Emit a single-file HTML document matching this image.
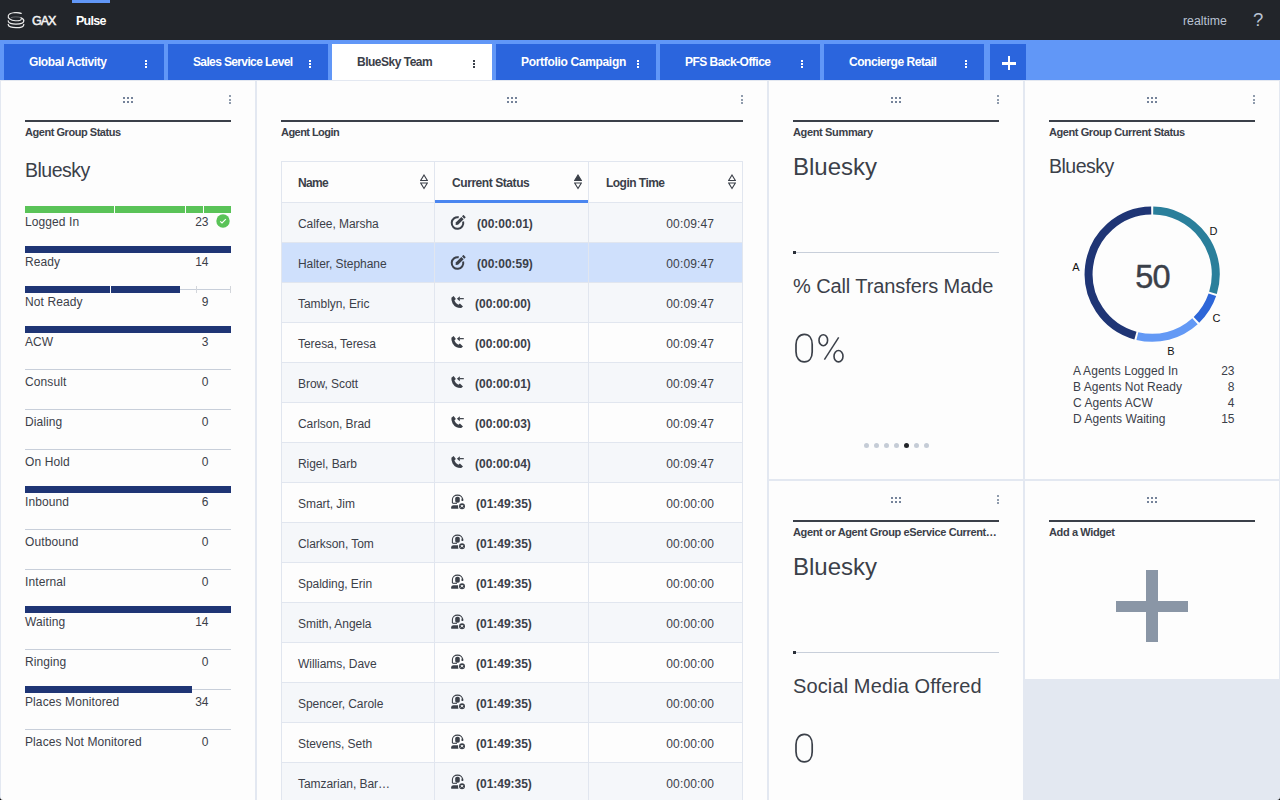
<!DOCTYPE html>
<html><head><meta charset="utf-8"><title>Pulse</title>
<style>
html,body{margin:0;padding:0;width:1280px;height:800px;overflow:hidden;background:#e3e8f1;font-family:"Liberation Sans", sans-serif;}
body{position:relative;}
</style></head><body>
<div style="position:absolute;left:0px;top:0px;width:1280px;height:40px;background:#22252a;"></div>
<div style="position:absolute;left:72px;top:0px;width:38px;height:3px;background:#6197f7;"></div>
<svg style="position:absolute;left:6px;top:10px" width="20" height="20" viewBox="0 0 20 20">
<g fill="none" stroke="#ececec" stroke-linecap="round">
<path d="M15.2 3.4 C11 2.0 3.6 2.4 2.3 5.6 C1.5 8.0 4.6 10.4 9.4 10.7 C12.6 10.9 15.0 10.3 15.2 9.4" stroke-width="1.15"/>
<path d="M8.4 2.6 C10.5 2.3 13 2.6 15.1 3.4" stroke-width="1" stroke-opacity="0.5"/>
<path d="M5.2 7.6 C7.4 6.6 12 6.6 15 7.6" stroke-width="1" stroke-opacity="0.35"/>
<path d="M2.2 10.9 C2.0 13.2 6.0 14.2 10 14.2 C14 14.2 17.8 13.2 17.8 10.8 C17.8 9.4 16.6 8.4 15.0 7.8" stroke-width="1.3"/>
<path d="M2.2 14.4 C2.0 16.8 6.0 17.7 10 17.7 C14 17.7 17.8 16.8 17.8 14.4" stroke-width="1.3"/>
</g></svg>
<div style="position:absolute;top:14.72px;font-size:12.5px;line-height:12.5px;font-weight:400;color:#f2f2f2;white-space:nowrap;letter-spacing:-1.0px;left:32px;-webkit-text-stroke:0.5px #f2f2f2;">GAX</div>
<div style="position:absolute;top:15.42px;font-size:12.5px;line-height:12.5px;font-weight:700;color:#ffffff;white-space:nowrap;letter-spacing:-0.75px;left:76px;">Pulse</div>
<div style="position:absolute;top:14.59px;font-size:12.3px;line-height:12.3px;font-weight:400;color:#b9c3d3;white-space:nowrap;left:1183px;">realtime</div>
<div style="position:absolute;top:11.34px;font-size:18.5px;line-height:18.5px;font-weight:400;color:#b9c3d3;white-space:nowrap;left:1253px;">?</div>
<div style="position:absolute;left:0px;top:40px;width:1280px;height:40px;background:#6197f7;"></div>
<div style="position:absolute;left:4px;top:44px;width:160px;height:36px;background:#2b65dd;"></div>
<div style="position:absolute;top:55.84px;font-size:12px;line-height:12px;font-weight:700;color:#ffffff;white-space:nowrap;letter-spacing:-0.4px;left:29px;">Global Activity</div>
<div style="position:absolute;left:145px;top:60px;width:2px;height:2px;background:#ffffff;"></div>
<div style="position:absolute;left:145px;top:63px;width:2px;height:2px;background:#ffffff;"></div>
<div style="position:absolute;left:145px;top:66px;width:2px;height:2px;background:#ffffff;"></div>
<div style="position:absolute;left:168px;top:44px;width:160px;height:36px;background:#2b65dd;"></div>
<div style="position:absolute;top:55.84px;font-size:12px;line-height:12px;font-weight:700;color:#ffffff;white-space:nowrap;letter-spacing:-0.63px;left:193px;">Sales Service Level</div>
<div style="position:absolute;left:309px;top:60px;width:2px;height:2px;background:#ffffff;"></div>
<div style="position:absolute;left:309px;top:63px;width:2px;height:2px;background:#ffffff;"></div>
<div style="position:absolute;left:309px;top:66px;width:2px;height:2px;background:#ffffff;"></div>
<div style="position:absolute;left:332px;top:44px;width:160px;height:36px;background:#ffffff;"></div>
<div style="position:absolute;top:55.84px;font-size:12px;line-height:12px;font-weight:700;color:#3b4049;white-space:nowrap;letter-spacing:-0.5px;left:357px;">BlueSky Team</div>
<div style="position:absolute;left:473px;top:60px;width:2px;height:2px;background:#3b4049;"></div>
<div style="position:absolute;left:473px;top:63px;width:2px;height:2px;background:#3b4049;"></div>
<div style="position:absolute;left:473px;top:66px;width:2px;height:2px;background:#3b4049;"></div>
<div style="position:absolute;left:496px;top:44px;width:160px;height:36px;background:#2b65dd;"></div>
<div style="position:absolute;top:55.84px;font-size:12px;line-height:12px;font-weight:700;color:#ffffff;white-space:nowrap;letter-spacing:-0.32px;left:521px;">Portfolio Campaign</div>
<div style="position:absolute;left:637px;top:60px;width:2px;height:2px;background:#ffffff;"></div>
<div style="position:absolute;left:637px;top:63px;width:2px;height:2px;background:#ffffff;"></div>
<div style="position:absolute;left:637px;top:66px;width:2px;height:2px;background:#ffffff;"></div>
<div style="position:absolute;left:660px;top:44px;width:160px;height:36px;background:#2b65dd;"></div>
<div style="position:absolute;top:55.84px;font-size:12px;line-height:12px;font-weight:700;color:#ffffff;white-space:nowrap;letter-spacing:-0.53px;left:685px;">PFS Back-Office</div>
<div style="position:absolute;left:801px;top:60px;width:2px;height:2px;background:#ffffff;"></div>
<div style="position:absolute;left:801px;top:63px;width:2px;height:2px;background:#ffffff;"></div>
<div style="position:absolute;left:801px;top:66px;width:2px;height:2px;background:#ffffff;"></div>
<div style="position:absolute;left:824px;top:44px;width:160px;height:36px;background:#2b65dd;"></div>
<div style="position:absolute;top:55.84px;font-size:12px;line-height:12px;font-weight:700;color:#ffffff;white-space:nowrap;letter-spacing:-0.45px;left:849px;">Concierge Retail</div>
<div style="position:absolute;left:965px;top:60px;width:2px;height:2px;background:#ffffff;"></div>
<div style="position:absolute;left:965px;top:63px;width:2px;height:2px;background:#ffffff;"></div>
<div style="position:absolute;left:965px;top:66px;width:2px;height:2px;background:#ffffff;"></div>
<div style="position:absolute;left:990px;top:44px;width:36px;height:36px;background:#2b65dd;"></div>
<div style="position:absolute;left:1002px;top:62px;width:14px;height:2.5px;background:#ffffff;"></div>
<div style="position:absolute;left:1007.5px;top:56px;width:2.5px;height:14px;background:#ffffff;"></div>
<div style="position:absolute;left:0px;top:80px;width:1280px;height:720px;background:#e3e8f1;"></div>
<div style="position:absolute;left:1px;top:81px;width:254px;height:719px;background:#fdfdfd;"></div>
<div style="position:absolute;left:123.0px;top:97px;width:2px;height:2px;background:#75839a;"></div>
<div style="position:absolute;left:127.0px;top:97px;width:2px;height:2px;background:#75839a;"></div>
<div style="position:absolute;left:131.0px;top:97px;width:2px;height:2px;background:#75839a;"></div>
<div style="position:absolute;left:123.0px;top:101px;width:2px;height:2px;background:#75839a;"></div>
<div style="position:absolute;left:127.0px;top:101px;width:2px;height:2px;background:#75839a;"></div>
<div style="position:absolute;left:131.0px;top:101px;width:2px;height:2px;background:#75839a;"></div>
<div style="position:absolute;left:229px;top:95.0px;width:2px;height:2px;background:#909cad;"></div>
<div style="position:absolute;left:229px;top:98.5px;width:2px;height:2px;background:#909cad;"></div>
<div style="position:absolute;left:229px;top:102.0px;width:2px;height:2px;background:#909cad;"></div>
<div style="position:absolute;left:25px;top:120px;width:206px;height:2px;background:#3b4049;"></div>
<div style="position:absolute;top:127.49px;font-size:11px;line-height:11px;font-weight:700;color:#3b4049;white-space:nowrap;letter-spacing:-0.46px;left:25px;">Agent Group Status</div>
<div style="position:absolute;top:160.69px;font-size:19.5px;line-height:19.5px;font-weight:400;color:#3b4049;white-space:nowrap;letter-spacing:-0.5px;left:25px;">Bluesky</div>
<div style="position:absolute;left:25px;top:206px;width:206px;height:6.5px;background:#5ac358;"></div>
<div style="position:absolute;left:114px;top:206px;width:1px;height:6.5px;background:#fdfdfd;"></div>
<div style="position:absolute;left:185px;top:206px;width:1px;height:6.5px;background:#fdfdfd;"></div>
<div style="position:absolute;left:203px;top:206px;width:1px;height:6.5px;background:#fdfdfd;"></div>
<svg style="position:absolute;left:216.4px;top:214px" width="14" height="14" viewBox="0 0 14 14"><circle cx="7" cy="7" r="6.7" fill="#5ac358"/><path d="M4.2 7.4 L6 9 L9.8 5.2" fill="none" stroke="#fff" stroke-width="1.15"/></svg>
<div style="position:absolute;top:215.84px;font-size:12px;line-height:12px;font-weight:400;color:#3b4049;white-space:nowrap;letter-spacing:0.1px;left:25px;">Logged In</div>
<div style="position:absolute;top:215.84px;font-size:12px;line-height:12px;font-weight:400;color:#3b4049;white-space:nowrap;left:-91.5px;width:300px;text-align:right;">23</div>
<div style="position:absolute;left:25px;top:246px;width:206px;height:6.5px;background:#1f3575;"></div>
<div style="position:absolute;top:255.84px;font-size:12px;line-height:12px;font-weight:400;color:#3b4049;white-space:nowrap;letter-spacing:0.1px;left:25px;">Ready</div>
<div style="position:absolute;top:255.84px;font-size:12px;line-height:12px;font-weight:400;color:#3b4049;white-space:nowrap;left:-91.5px;width:300px;text-align:right;">14</div>
<div style="position:absolute;left:25px;top:289px;width:206px;height:1px;background:#c8cfda;"></div>
<div style="position:absolute;left:196px;top:286px;width:1px;height:6.5px;background:#d3d6db;"></div>
<div style="position:absolute;left:230px;top:286px;width:1px;height:6.5px;background:#d3d6db;"></div>
<div style="position:absolute;left:25px;top:286px;width:155px;height:6.5px;background:#1f3575;"></div>
<div style="position:absolute;left:110px;top:286px;width:1px;height:6.5px;background:#fdfdfd;"></div>
<div style="position:absolute;top:295.84px;font-size:12px;line-height:12px;font-weight:400;color:#3b4049;white-space:nowrap;letter-spacing:0.1px;left:25px;">Not Ready</div>
<div style="position:absolute;top:295.84px;font-size:12px;line-height:12px;font-weight:400;color:#3b4049;white-space:nowrap;left:-91.5px;width:300px;text-align:right;">9</div>
<div style="position:absolute;left:25px;top:326px;width:206px;height:6.5px;background:#1f3575;"></div>
<div style="position:absolute;top:335.84px;font-size:12px;line-height:12px;font-weight:400;color:#3b4049;white-space:nowrap;letter-spacing:0.1px;left:25px;">ACW</div>
<div style="position:absolute;top:335.84px;font-size:12px;line-height:12px;font-weight:400;color:#3b4049;white-space:nowrap;left:-91.5px;width:300px;text-align:right;">3</div>
<div style="position:absolute;left:25px;top:369px;width:206px;height:1px;background:#c8cfda;"></div>
<div style="position:absolute;top:375.84px;font-size:12px;line-height:12px;font-weight:400;color:#3b4049;white-space:nowrap;letter-spacing:0.1px;left:25px;">Consult</div>
<div style="position:absolute;top:375.84px;font-size:12px;line-height:12px;font-weight:400;color:#3b4049;white-space:nowrap;left:-91.5px;width:300px;text-align:right;">0</div>
<div style="position:absolute;left:25px;top:409px;width:206px;height:1px;background:#c8cfda;"></div>
<div style="position:absolute;top:415.84px;font-size:12px;line-height:12px;font-weight:400;color:#3b4049;white-space:nowrap;letter-spacing:0.1px;left:25px;">Dialing</div>
<div style="position:absolute;top:415.84px;font-size:12px;line-height:12px;font-weight:400;color:#3b4049;white-space:nowrap;left:-91.5px;width:300px;text-align:right;">0</div>
<div style="position:absolute;left:25px;top:449px;width:206px;height:1px;background:#c8cfda;"></div>
<div style="position:absolute;top:455.84px;font-size:12px;line-height:12px;font-weight:400;color:#3b4049;white-space:nowrap;letter-spacing:0.1px;left:25px;">On Hold</div>
<div style="position:absolute;top:455.84px;font-size:12px;line-height:12px;font-weight:400;color:#3b4049;white-space:nowrap;left:-91.5px;width:300px;text-align:right;">0</div>
<div style="position:absolute;left:25px;top:486px;width:206px;height:6.5px;background:#1f3575;"></div>
<div style="position:absolute;top:495.84px;font-size:12px;line-height:12px;font-weight:400;color:#3b4049;white-space:nowrap;letter-spacing:0.1px;left:25px;">Inbound</div>
<div style="position:absolute;top:495.84px;font-size:12px;line-height:12px;font-weight:400;color:#3b4049;white-space:nowrap;left:-91.5px;width:300px;text-align:right;">6</div>
<div style="position:absolute;left:25px;top:529px;width:206px;height:1px;background:#c8cfda;"></div>
<div style="position:absolute;top:535.84px;font-size:12px;line-height:12px;font-weight:400;color:#3b4049;white-space:nowrap;letter-spacing:0.1px;left:25px;">Outbound</div>
<div style="position:absolute;top:535.84px;font-size:12px;line-height:12px;font-weight:400;color:#3b4049;white-space:nowrap;left:-91.5px;width:300px;text-align:right;">0</div>
<div style="position:absolute;left:25px;top:569px;width:206px;height:1px;background:#c8cfda;"></div>
<div style="position:absolute;top:575.84px;font-size:12px;line-height:12px;font-weight:400;color:#3b4049;white-space:nowrap;letter-spacing:0.1px;left:25px;">Internal</div>
<div style="position:absolute;top:575.84px;font-size:12px;line-height:12px;font-weight:400;color:#3b4049;white-space:nowrap;left:-91.5px;width:300px;text-align:right;">0</div>
<div style="position:absolute;left:25px;top:606px;width:206px;height:6.5px;background:#1f3575;"></div>
<div style="position:absolute;top:615.84px;font-size:12px;line-height:12px;font-weight:400;color:#3b4049;white-space:nowrap;letter-spacing:0.1px;left:25px;">Waiting</div>
<div style="position:absolute;top:615.84px;font-size:12px;line-height:12px;font-weight:400;color:#3b4049;white-space:nowrap;left:-91.5px;width:300px;text-align:right;">14</div>
<div style="position:absolute;left:25px;top:649px;width:206px;height:1px;background:#c8cfda;"></div>
<div style="position:absolute;top:655.84px;font-size:12px;line-height:12px;font-weight:400;color:#3b4049;white-space:nowrap;letter-spacing:0.1px;left:25px;">Ringing</div>
<div style="position:absolute;top:655.84px;font-size:12px;line-height:12px;font-weight:400;color:#3b4049;white-space:nowrap;left:-91.5px;width:300px;text-align:right;">0</div>
<div style="position:absolute;left:25px;top:689px;width:206px;height:1px;background:#c8cfda;"></div>
<div style="position:absolute;left:25px;top:686px;width:167px;height:6.5px;background:#1f3575;"></div>
<div style="position:absolute;top:695.84px;font-size:12px;line-height:12px;font-weight:400;color:#3b4049;white-space:nowrap;letter-spacing:0.1px;left:25px;">Places Monitored</div>
<div style="position:absolute;top:695.84px;font-size:12px;line-height:12px;font-weight:400;color:#3b4049;white-space:nowrap;left:-91.5px;width:300px;text-align:right;">34</div>
<div style="position:absolute;left:25px;top:729px;width:206px;height:1px;background:#c8cfda;"></div>
<div style="position:absolute;top:735.84px;font-size:12px;line-height:12px;font-weight:400;color:#3b4049;white-space:nowrap;letter-spacing:0.1px;left:25px;">Places Not Monitored</div>
<div style="position:absolute;top:735.84px;font-size:12px;line-height:12px;font-weight:400;color:#3b4049;white-space:nowrap;left:-91.5px;width:300px;text-align:right;">0</div>
<div style="position:absolute;left:257px;top:81px;width:510px;height:719px;background:#fdfdfd;"></div>
<div style="position:absolute;left:507.0px;top:97px;width:2px;height:2px;background:#75839a;"></div>
<div style="position:absolute;left:511.0px;top:97px;width:2px;height:2px;background:#75839a;"></div>
<div style="position:absolute;left:515.0px;top:97px;width:2px;height:2px;background:#75839a;"></div>
<div style="position:absolute;left:507.0px;top:101px;width:2px;height:2px;background:#75839a;"></div>
<div style="position:absolute;left:511.0px;top:101px;width:2px;height:2px;background:#75839a;"></div>
<div style="position:absolute;left:515.0px;top:101px;width:2px;height:2px;background:#75839a;"></div>
<div style="position:absolute;left:741px;top:95.0px;width:2px;height:2px;background:#909cad;"></div>
<div style="position:absolute;left:741px;top:98.5px;width:2px;height:2px;background:#909cad;"></div>
<div style="position:absolute;left:741px;top:102.0px;width:2px;height:2px;background:#909cad;"></div>
<div style="position:absolute;left:281px;top:120px;width:462px;height:2px;background:#3b4049;"></div>
<div style="position:absolute;top:127.49px;font-size:11px;line-height:11px;font-weight:700;color:#3b4049;white-space:nowrap;letter-spacing:-0.55px;left:281px;">Agent Login</div>
<div style="position:absolute;left:281px;top:161px;width:462px;height:639px;background:#fdfdfd;"></div>
<div style="position:absolute;left:282px;top:202px;width:460px;height:40px;background:#f5f7fa;"></div>
<div style="position:absolute;left:281px;top:202px;width:462px;height:1px;background:#e1e6ef;"></div>
<div style="position:absolute;top:217.84px;font-size:12px;line-height:12px;font-weight:400;color:#3b4049;white-space:nowrap;letter-spacing:-0.05px;left:298px;">Calfee, Marsha</div>
<div style="position:absolute;left:450px;top:215px;width:16px;height:16px"><svg width="16" height="16" viewBox="0 0 16 16" style="position:absolute;left:0;top:0"><path d="M13.13 6.6 A5.8 5.8 0 1 1 8.73 2.33" fill="none" stroke="#3b4049" stroke-width="2"/><path d="M5.77 7.57 L11.37 1.97 L13.63 4.23 L8.03 9.83 L5.6 10.1 Z" fill="#3b4049"/><path d="M11.97 1.37 L13.47 -0.13 L15.73 2.13 L14.23 3.63 Z" fill="#3b4049"/></svg></div>
<div style="position:absolute;top:217.84px;font-size:12px;line-height:12px;font-weight:700;color:#3b4049;white-space:nowrap;letter-spacing:-0.02px;left:477px;">(00:00:01)</div>
<div style="position:absolute;top:217.84px;font-size:12px;line-height:12px;font-weight:400;color:#3b4049;white-space:nowrap;letter-spacing:0.15px;left:414.20000000000005px;width:300px;text-align:right;">00:09:47</div>
<div style="position:absolute;left:282px;top:242px;width:460px;height:40px;background:#cfe0fc;"></div>
<div style="position:absolute;left:281px;top:242px;width:462px;height:1px;background:#e1e6ef;"></div>
<div style="position:absolute;top:257.84px;font-size:12px;line-height:12px;font-weight:400;color:#3b4049;white-space:nowrap;letter-spacing:-0.05px;left:298px;">Halter, Stephane</div>
<div style="position:absolute;left:450px;top:255px;width:16px;height:16px"><svg width="16" height="16" viewBox="0 0 16 16" style="position:absolute;left:0;top:0"><path d="M13.13 6.6 A5.8 5.8 0 1 1 8.73 2.33" fill="none" stroke="#3b4049" stroke-width="2"/><path d="M5.77 7.57 L11.37 1.97 L13.63 4.23 L8.03 9.83 L5.6 10.1 Z" fill="#3b4049"/><path d="M11.97 1.37 L13.47 -0.13 L15.73 2.13 L14.23 3.63 Z" fill="#3b4049"/></svg></div>
<div style="position:absolute;top:257.84px;font-size:12px;line-height:12px;font-weight:700;color:#3b4049;white-space:nowrap;letter-spacing:-0.02px;left:477px;">(00:00:59)</div>
<div style="position:absolute;top:257.84px;font-size:12px;line-height:12px;font-weight:400;color:#3b4049;white-space:nowrap;letter-spacing:0.15px;left:414.20000000000005px;width:300px;text-align:right;">00:09:47</div>
<div style="position:absolute;left:282px;top:282px;width:460px;height:40px;background:#f5f7fa;"></div>
<div style="position:absolute;left:281px;top:282px;width:462px;height:1px;background:#e1e6ef;"></div>
<div style="position:absolute;top:297.84px;font-size:12px;line-height:12px;font-weight:400;color:#3b4049;white-space:nowrap;letter-spacing:-0.05px;left:298px;">Tamblyn, Eric</div>
<div style="position:absolute;left:450px;top:295px;width:16px;height:16px"><svg width="16" height="16" viewBox="0 0 16 16" style="position:absolute;left:0;top:0"><path d="M1.4 2.8 L3.6 1.0 L5.9 3.9 L4.4 5.4 Q5.6 8.4 8.4 9.8 L9.9 8.5 L13 11.4 L11.2 13 Q5.6 13.2 2.6 8.4 Q1.0 5.4 1.4 2.8 Z" fill="#3b4049"/><path d="M6.9 3.7 L9.8 1.2 L9.8 6.3 Z" fill="#3b4049"/><rect x="9.5" y="3.05" width="4.3" height="1.2" fill="#3b4049"/></svg></div>
<div style="position:absolute;top:297.84px;font-size:12px;line-height:12px;font-weight:700;color:#3b4049;white-space:nowrap;letter-spacing:-0.02px;left:475px;">(00:00:00)</div>
<div style="position:absolute;top:297.84px;font-size:12px;line-height:12px;font-weight:400;color:#3b4049;white-space:nowrap;letter-spacing:0.15px;left:414.20000000000005px;width:300px;text-align:right;">00:09:47</div>
<div style="position:absolute;left:282px;top:322px;width:460px;height:40px;background:#fdfdfd;"></div>
<div style="position:absolute;left:281px;top:322px;width:462px;height:1px;background:#e1e6ef;"></div>
<div style="position:absolute;top:337.84px;font-size:12px;line-height:12px;font-weight:400;color:#3b4049;white-space:nowrap;letter-spacing:-0.05px;left:298px;">Teresa, Teresa</div>
<div style="position:absolute;left:450px;top:335px;width:16px;height:16px"><svg width="16" height="16" viewBox="0 0 16 16" style="position:absolute;left:0;top:0"><path d="M1.4 2.8 L3.6 1.0 L5.9 3.9 L4.4 5.4 Q5.6 8.4 8.4 9.8 L9.9 8.5 L13 11.4 L11.2 13 Q5.6 13.2 2.6 8.4 Q1.0 5.4 1.4 2.8 Z" fill="#3b4049"/><path d="M6.9 3.7 L9.8 1.2 L9.8 6.3 Z" fill="#3b4049"/><rect x="9.5" y="3.05" width="4.3" height="1.2" fill="#3b4049"/></svg></div>
<div style="position:absolute;top:337.84px;font-size:12px;line-height:12px;font-weight:700;color:#3b4049;white-space:nowrap;letter-spacing:-0.02px;left:475px;">(00:00:00)</div>
<div style="position:absolute;top:337.84px;font-size:12px;line-height:12px;font-weight:400;color:#3b4049;white-space:nowrap;letter-spacing:0.15px;left:414.20000000000005px;width:300px;text-align:right;">00:09:47</div>
<div style="position:absolute;left:282px;top:362px;width:460px;height:40px;background:#f5f7fa;"></div>
<div style="position:absolute;left:281px;top:362px;width:462px;height:1px;background:#e1e6ef;"></div>
<div style="position:absolute;top:377.84px;font-size:12px;line-height:12px;font-weight:400;color:#3b4049;white-space:nowrap;letter-spacing:-0.05px;left:298px;">Brow, Scott</div>
<div style="position:absolute;left:450px;top:375px;width:16px;height:16px"><svg width="16" height="16" viewBox="0 0 16 16" style="position:absolute;left:0;top:0"><path d="M1.4 2.8 L3.6 1.0 L5.9 3.9 L4.4 5.4 Q5.6 8.4 8.4 9.8 L9.9 8.5 L13 11.4 L11.2 13 Q5.6 13.2 2.6 8.4 Q1.0 5.4 1.4 2.8 Z" fill="#3b4049"/><path d="M6.9 3.7 L9.8 1.2 L9.8 6.3 Z" fill="#3b4049"/><rect x="9.5" y="3.05" width="4.3" height="1.2" fill="#3b4049"/></svg></div>
<div style="position:absolute;top:377.84px;font-size:12px;line-height:12px;font-weight:700;color:#3b4049;white-space:nowrap;letter-spacing:-0.02px;left:475px;">(00:00:01)</div>
<div style="position:absolute;top:377.84px;font-size:12px;line-height:12px;font-weight:400;color:#3b4049;white-space:nowrap;letter-spacing:0.15px;left:414.20000000000005px;width:300px;text-align:right;">00:09:47</div>
<div style="position:absolute;left:282px;top:402px;width:460px;height:40px;background:#fdfdfd;"></div>
<div style="position:absolute;left:281px;top:402px;width:462px;height:1px;background:#e1e6ef;"></div>
<div style="position:absolute;top:417.84px;font-size:12px;line-height:12px;font-weight:400;color:#3b4049;white-space:nowrap;letter-spacing:-0.05px;left:298px;">Carlson, Brad</div>
<div style="position:absolute;left:450px;top:415px;width:16px;height:16px"><svg width="16" height="16" viewBox="0 0 16 16" style="position:absolute;left:0;top:0"><path d="M1.4 2.8 L3.6 1.0 L5.9 3.9 L4.4 5.4 Q5.6 8.4 8.4 9.8 L9.9 8.5 L13 11.4 L11.2 13 Q5.6 13.2 2.6 8.4 Q1.0 5.4 1.4 2.8 Z" fill="#3b4049"/><path d="M6.9 3.7 L9.8 1.2 L9.8 6.3 Z" fill="#3b4049"/><rect x="9.5" y="3.05" width="4.3" height="1.2" fill="#3b4049"/></svg></div>
<div style="position:absolute;top:417.84px;font-size:12px;line-height:12px;font-weight:700;color:#3b4049;white-space:nowrap;letter-spacing:-0.02px;left:475px;">(00:00:03)</div>
<div style="position:absolute;top:417.84px;font-size:12px;line-height:12px;font-weight:400;color:#3b4049;white-space:nowrap;letter-spacing:0.15px;left:414.20000000000005px;width:300px;text-align:right;">00:09:47</div>
<div style="position:absolute;left:282px;top:442px;width:460px;height:40px;background:#f5f7fa;"></div>
<div style="position:absolute;left:281px;top:442px;width:462px;height:1px;background:#e1e6ef;"></div>
<div style="position:absolute;top:457.84px;font-size:12px;line-height:12px;font-weight:400;color:#3b4049;white-space:nowrap;letter-spacing:-0.05px;left:298px;">Rigel, Barb</div>
<div style="position:absolute;left:450px;top:455px;width:16px;height:16px"><svg width="16" height="16" viewBox="0 0 16 16" style="position:absolute;left:0;top:0"><path d="M1.4 2.8 L3.6 1.0 L5.9 3.9 L4.4 5.4 Q5.6 8.4 8.4 9.8 L9.9 8.5 L13 11.4 L11.2 13 Q5.6 13.2 2.6 8.4 Q1.0 5.4 1.4 2.8 Z" fill="#3b4049"/><path d="M6.9 3.7 L9.8 1.2 L9.8 6.3 Z" fill="#3b4049"/><rect x="9.5" y="3.05" width="4.3" height="1.2" fill="#3b4049"/></svg></div>
<div style="position:absolute;top:457.84px;font-size:12px;line-height:12px;font-weight:700;color:#3b4049;white-space:nowrap;letter-spacing:-0.02px;left:475px;">(00:00:04)</div>
<div style="position:absolute;top:457.84px;font-size:12px;line-height:12px;font-weight:400;color:#3b4049;white-space:nowrap;letter-spacing:0.15px;left:414.20000000000005px;width:300px;text-align:right;">00:09:47</div>
<div style="position:absolute;left:282px;top:482px;width:460px;height:40px;background:#fdfdfd;"></div>
<div style="position:absolute;left:281px;top:482px;width:462px;height:1px;background:#e1e6ef;"></div>
<div style="position:absolute;top:497.84px;font-size:12px;line-height:12px;font-weight:400;color:#3b4049;white-space:nowrap;letter-spacing:-0.05px;left:298px;">Smart, Jim</div>
<div style="position:absolute;left:450px;top:494px;width:16px;height:16px"><svg width="16" height="16" viewBox="0 0 16 16" style="position:absolute;left:0;top:0"><path d="M2.4 9 L2.4 5.8 C2.4 3 4.6 1.1 7.5 1.1 C10.4 1.1 12.6 3 12.6 5.8" fill="none" stroke="#3b4049" stroke-width="1.1"/><rect x="11.5" y="4.6" width="1.8" height="2.3" rx="0.5" fill="#3b4049"/><rect x="5.2" y="2.8" width="4.6" height="6" rx="1.8" fill="#3b4049"/><path d="M2.4 9.3 L7 9.3" stroke="#3b4049" stroke-width="1.1"/><path d="M1.2 14.8 L1.2 13.2 C1.2 11.9 2.2 11.2 3.4 11.2 L8.4 11.2 L8.4 14.8 Z" fill="#3b4049"/><circle cx="12" cy="12.2" r="3.7" fill="#fdfdfd"/><circle cx="12" cy="12.2" r="3" fill="#3b4049"/><path d="M10.8 11 L13.2 13.4 M13.2 11 L10.8 13.4" stroke="#fdfdfd" stroke-width="1"/></svg></div>
<div style="position:absolute;top:497.84px;font-size:12px;line-height:12px;font-weight:700;color:#3b4049;white-space:nowrap;letter-spacing:-0.02px;left:476px;">(01:49:35)</div>
<div style="position:absolute;top:497.84px;font-size:12px;line-height:12px;font-weight:400;color:#3b4049;white-space:nowrap;letter-spacing:0.15px;left:414.20000000000005px;width:300px;text-align:right;">00:00:00</div>
<div style="position:absolute;left:282px;top:522px;width:460px;height:40px;background:#f5f7fa;"></div>
<div style="position:absolute;left:281px;top:522px;width:462px;height:1px;background:#e1e6ef;"></div>
<div style="position:absolute;top:537.84px;font-size:12px;line-height:12px;font-weight:400;color:#3b4049;white-space:nowrap;letter-spacing:-0.05px;left:298px;">Clarkson, Tom</div>
<div style="position:absolute;left:450px;top:534px;width:16px;height:16px"><svg width="16" height="16" viewBox="0 0 16 16" style="position:absolute;left:0;top:0"><path d="M2.4 9 L2.4 5.8 C2.4 3 4.6 1.1 7.5 1.1 C10.4 1.1 12.6 3 12.6 5.8" fill="none" stroke="#3b4049" stroke-width="1.1"/><rect x="11.5" y="4.6" width="1.8" height="2.3" rx="0.5" fill="#3b4049"/><rect x="5.2" y="2.8" width="4.6" height="6" rx="1.8" fill="#3b4049"/><path d="M2.4 9.3 L7 9.3" stroke="#3b4049" stroke-width="1.1"/><path d="M1.2 14.8 L1.2 13.2 C1.2 11.9 2.2 11.2 3.4 11.2 L8.4 11.2 L8.4 14.8 Z" fill="#3b4049"/><circle cx="12" cy="12.2" r="3.7" fill="#fdfdfd"/><circle cx="12" cy="12.2" r="3" fill="#3b4049"/><path d="M10.8 11 L13.2 13.4 M13.2 11 L10.8 13.4" stroke="#fdfdfd" stroke-width="1"/></svg></div>
<div style="position:absolute;top:537.84px;font-size:12px;line-height:12px;font-weight:700;color:#3b4049;white-space:nowrap;letter-spacing:-0.02px;left:476px;">(01:49:35)</div>
<div style="position:absolute;top:537.84px;font-size:12px;line-height:12px;font-weight:400;color:#3b4049;white-space:nowrap;letter-spacing:0.15px;left:414.20000000000005px;width:300px;text-align:right;">00:00:00</div>
<div style="position:absolute;left:282px;top:562px;width:460px;height:40px;background:#fdfdfd;"></div>
<div style="position:absolute;left:281px;top:562px;width:462px;height:1px;background:#e1e6ef;"></div>
<div style="position:absolute;top:577.84px;font-size:12px;line-height:12px;font-weight:400;color:#3b4049;white-space:nowrap;letter-spacing:-0.05px;left:298px;">Spalding, Erin</div>
<div style="position:absolute;left:450px;top:574px;width:16px;height:16px"><svg width="16" height="16" viewBox="0 0 16 16" style="position:absolute;left:0;top:0"><path d="M2.4 9 L2.4 5.8 C2.4 3 4.6 1.1 7.5 1.1 C10.4 1.1 12.6 3 12.6 5.8" fill="none" stroke="#3b4049" stroke-width="1.1"/><rect x="11.5" y="4.6" width="1.8" height="2.3" rx="0.5" fill="#3b4049"/><rect x="5.2" y="2.8" width="4.6" height="6" rx="1.8" fill="#3b4049"/><path d="M2.4 9.3 L7 9.3" stroke="#3b4049" stroke-width="1.1"/><path d="M1.2 14.8 L1.2 13.2 C1.2 11.9 2.2 11.2 3.4 11.2 L8.4 11.2 L8.4 14.8 Z" fill="#3b4049"/><circle cx="12" cy="12.2" r="3.7" fill="#fdfdfd"/><circle cx="12" cy="12.2" r="3" fill="#3b4049"/><path d="M10.8 11 L13.2 13.4 M13.2 11 L10.8 13.4" stroke="#fdfdfd" stroke-width="1"/></svg></div>
<div style="position:absolute;top:577.84px;font-size:12px;line-height:12px;font-weight:700;color:#3b4049;white-space:nowrap;letter-spacing:-0.02px;left:476px;">(01:49:35)</div>
<div style="position:absolute;top:577.84px;font-size:12px;line-height:12px;font-weight:400;color:#3b4049;white-space:nowrap;letter-spacing:0.15px;left:414.20000000000005px;width:300px;text-align:right;">00:00:00</div>
<div style="position:absolute;left:282px;top:602px;width:460px;height:40px;background:#f5f7fa;"></div>
<div style="position:absolute;left:281px;top:602px;width:462px;height:1px;background:#e1e6ef;"></div>
<div style="position:absolute;top:617.84px;font-size:12px;line-height:12px;font-weight:400;color:#3b4049;white-space:nowrap;letter-spacing:-0.05px;left:298px;">Smith, Angela</div>
<div style="position:absolute;left:450px;top:614px;width:16px;height:16px"><svg width="16" height="16" viewBox="0 0 16 16" style="position:absolute;left:0;top:0"><path d="M2.4 9 L2.4 5.8 C2.4 3 4.6 1.1 7.5 1.1 C10.4 1.1 12.6 3 12.6 5.8" fill="none" stroke="#3b4049" stroke-width="1.1"/><rect x="11.5" y="4.6" width="1.8" height="2.3" rx="0.5" fill="#3b4049"/><rect x="5.2" y="2.8" width="4.6" height="6" rx="1.8" fill="#3b4049"/><path d="M2.4 9.3 L7 9.3" stroke="#3b4049" stroke-width="1.1"/><path d="M1.2 14.8 L1.2 13.2 C1.2 11.9 2.2 11.2 3.4 11.2 L8.4 11.2 L8.4 14.8 Z" fill="#3b4049"/><circle cx="12" cy="12.2" r="3.7" fill="#fdfdfd"/><circle cx="12" cy="12.2" r="3" fill="#3b4049"/><path d="M10.8 11 L13.2 13.4 M13.2 11 L10.8 13.4" stroke="#fdfdfd" stroke-width="1"/></svg></div>
<div style="position:absolute;top:617.84px;font-size:12px;line-height:12px;font-weight:700;color:#3b4049;white-space:nowrap;letter-spacing:-0.02px;left:476px;">(01:49:35)</div>
<div style="position:absolute;top:617.84px;font-size:12px;line-height:12px;font-weight:400;color:#3b4049;white-space:nowrap;letter-spacing:0.15px;left:414.20000000000005px;width:300px;text-align:right;">00:00:00</div>
<div style="position:absolute;left:282px;top:642px;width:460px;height:40px;background:#fdfdfd;"></div>
<div style="position:absolute;left:281px;top:642px;width:462px;height:1px;background:#e1e6ef;"></div>
<div style="position:absolute;top:657.84px;font-size:12px;line-height:12px;font-weight:400;color:#3b4049;white-space:nowrap;letter-spacing:-0.05px;left:298px;">Williams, Dave</div>
<div style="position:absolute;left:450px;top:654px;width:16px;height:16px"><svg width="16" height="16" viewBox="0 0 16 16" style="position:absolute;left:0;top:0"><path d="M2.4 9 L2.4 5.8 C2.4 3 4.6 1.1 7.5 1.1 C10.4 1.1 12.6 3 12.6 5.8" fill="none" stroke="#3b4049" stroke-width="1.1"/><rect x="11.5" y="4.6" width="1.8" height="2.3" rx="0.5" fill="#3b4049"/><rect x="5.2" y="2.8" width="4.6" height="6" rx="1.8" fill="#3b4049"/><path d="M2.4 9.3 L7 9.3" stroke="#3b4049" stroke-width="1.1"/><path d="M1.2 14.8 L1.2 13.2 C1.2 11.9 2.2 11.2 3.4 11.2 L8.4 11.2 L8.4 14.8 Z" fill="#3b4049"/><circle cx="12" cy="12.2" r="3.7" fill="#fdfdfd"/><circle cx="12" cy="12.2" r="3" fill="#3b4049"/><path d="M10.8 11 L13.2 13.4 M13.2 11 L10.8 13.4" stroke="#fdfdfd" stroke-width="1"/></svg></div>
<div style="position:absolute;top:657.84px;font-size:12px;line-height:12px;font-weight:700;color:#3b4049;white-space:nowrap;letter-spacing:-0.02px;left:476px;">(01:49:35)</div>
<div style="position:absolute;top:657.84px;font-size:12px;line-height:12px;font-weight:400;color:#3b4049;white-space:nowrap;letter-spacing:0.15px;left:414.20000000000005px;width:300px;text-align:right;">00:00:00</div>
<div style="position:absolute;left:282px;top:682px;width:460px;height:40px;background:#f5f7fa;"></div>
<div style="position:absolute;left:281px;top:682px;width:462px;height:1px;background:#e1e6ef;"></div>
<div style="position:absolute;top:697.84px;font-size:12px;line-height:12px;font-weight:400;color:#3b4049;white-space:nowrap;letter-spacing:-0.05px;left:298px;">Spencer, Carole</div>
<div style="position:absolute;left:450px;top:694px;width:16px;height:16px"><svg width="16" height="16" viewBox="0 0 16 16" style="position:absolute;left:0;top:0"><path d="M2.4 9 L2.4 5.8 C2.4 3 4.6 1.1 7.5 1.1 C10.4 1.1 12.6 3 12.6 5.8" fill="none" stroke="#3b4049" stroke-width="1.1"/><rect x="11.5" y="4.6" width="1.8" height="2.3" rx="0.5" fill="#3b4049"/><rect x="5.2" y="2.8" width="4.6" height="6" rx="1.8" fill="#3b4049"/><path d="M2.4 9.3 L7 9.3" stroke="#3b4049" stroke-width="1.1"/><path d="M1.2 14.8 L1.2 13.2 C1.2 11.9 2.2 11.2 3.4 11.2 L8.4 11.2 L8.4 14.8 Z" fill="#3b4049"/><circle cx="12" cy="12.2" r="3.7" fill="#fdfdfd"/><circle cx="12" cy="12.2" r="3" fill="#3b4049"/><path d="M10.8 11 L13.2 13.4 M13.2 11 L10.8 13.4" stroke="#fdfdfd" stroke-width="1"/></svg></div>
<div style="position:absolute;top:697.84px;font-size:12px;line-height:12px;font-weight:700;color:#3b4049;white-space:nowrap;letter-spacing:-0.02px;left:476px;">(01:49:35)</div>
<div style="position:absolute;top:697.84px;font-size:12px;line-height:12px;font-weight:400;color:#3b4049;white-space:nowrap;letter-spacing:0.15px;left:414.20000000000005px;width:300px;text-align:right;">00:00:00</div>
<div style="position:absolute;left:282px;top:722px;width:460px;height:40px;background:#fdfdfd;"></div>
<div style="position:absolute;left:281px;top:722px;width:462px;height:1px;background:#e1e6ef;"></div>
<div style="position:absolute;top:737.84px;font-size:12px;line-height:12px;font-weight:400;color:#3b4049;white-space:nowrap;letter-spacing:-0.05px;left:298px;">Stevens, Seth</div>
<div style="position:absolute;left:450px;top:734px;width:16px;height:16px"><svg width="16" height="16" viewBox="0 0 16 16" style="position:absolute;left:0;top:0"><path d="M2.4 9 L2.4 5.8 C2.4 3 4.6 1.1 7.5 1.1 C10.4 1.1 12.6 3 12.6 5.8" fill="none" stroke="#3b4049" stroke-width="1.1"/><rect x="11.5" y="4.6" width="1.8" height="2.3" rx="0.5" fill="#3b4049"/><rect x="5.2" y="2.8" width="4.6" height="6" rx="1.8" fill="#3b4049"/><path d="M2.4 9.3 L7 9.3" stroke="#3b4049" stroke-width="1.1"/><path d="M1.2 14.8 L1.2 13.2 C1.2 11.9 2.2 11.2 3.4 11.2 L8.4 11.2 L8.4 14.8 Z" fill="#3b4049"/><circle cx="12" cy="12.2" r="3.7" fill="#fdfdfd"/><circle cx="12" cy="12.2" r="3" fill="#3b4049"/><path d="M10.8 11 L13.2 13.4 M13.2 11 L10.8 13.4" stroke="#fdfdfd" stroke-width="1"/></svg></div>
<div style="position:absolute;top:737.84px;font-size:12px;line-height:12px;font-weight:700;color:#3b4049;white-space:nowrap;letter-spacing:-0.02px;left:476px;">(01:49:35)</div>
<div style="position:absolute;top:737.84px;font-size:12px;line-height:12px;font-weight:400;color:#3b4049;white-space:nowrap;letter-spacing:0.15px;left:414.20000000000005px;width:300px;text-align:right;">00:00:00</div>
<div style="position:absolute;left:282px;top:762px;width:460px;height:40px;background:#f5f7fa;"></div>
<div style="position:absolute;left:281px;top:762px;width:462px;height:1px;background:#e1e6ef;"></div>
<div style="position:absolute;top:777.84px;font-size:12px;line-height:12px;font-weight:400;color:#3b4049;white-space:nowrap;letter-spacing:-0.05px;left:298px;">Tamzarian, Bar…</div>
<div style="position:absolute;left:450px;top:774px;width:16px;height:16px"><svg width="16" height="16" viewBox="0 0 16 16" style="position:absolute;left:0;top:0"><path d="M2.4 9 L2.4 5.8 C2.4 3 4.6 1.1 7.5 1.1 C10.4 1.1 12.6 3 12.6 5.8" fill="none" stroke="#3b4049" stroke-width="1.1"/><rect x="11.5" y="4.6" width="1.8" height="2.3" rx="0.5" fill="#3b4049"/><rect x="5.2" y="2.8" width="4.6" height="6" rx="1.8" fill="#3b4049"/><path d="M2.4 9.3 L7 9.3" stroke="#3b4049" stroke-width="1.1"/><path d="M1.2 14.8 L1.2 13.2 C1.2 11.9 2.2 11.2 3.4 11.2 L8.4 11.2 L8.4 14.8 Z" fill="#3b4049"/><circle cx="12" cy="12.2" r="3.7" fill="#fdfdfd"/><circle cx="12" cy="12.2" r="3" fill="#3b4049"/><path d="M10.8 11 L13.2 13.4 M13.2 11 L10.8 13.4" stroke="#fdfdfd" stroke-width="1"/></svg></div>
<div style="position:absolute;top:777.84px;font-size:12px;line-height:12px;font-weight:700;color:#3b4049;white-space:nowrap;letter-spacing:-0.02px;left:476px;">(01:49:35)</div>
<div style="position:absolute;top:777.84px;font-size:12px;line-height:12px;font-weight:400;color:#3b4049;white-space:nowrap;letter-spacing:0.15px;left:414.20000000000005px;width:300px;text-align:right;">00:00:00</div>
<div style="position:absolute;left:281px;top:161px;width:462px;height:1px;background:#e1e6ef;"></div>
<div style="position:absolute;left:281px;top:161px;width:1px;height:639px;background:#e1e6ef;"></div>
<div style="position:absolute;left:742px;top:161px;width:1px;height:639px;background:#e1e6ef;"></div>
<div style="position:absolute;left:434px;top:161px;width:1px;height:639px;background:#e1e6ef;"></div>
<div style="position:absolute;left:588px;top:161px;width:1px;height:639px;background:#e1e6ef;"></div>
<div style="position:absolute;left:435px;top:200px;width:153px;height:2.5px;background:#4a86f0;"></div>
<div style="position:absolute;top:176.84px;font-size:12px;line-height:12px;font-weight:700;color:#3b4049;white-space:nowrap;letter-spacing:-0.7px;left:298px;">Name</div>
<div style="position:absolute;top:176.84px;font-size:12px;line-height:12px;font-weight:700;color:#3b4049;white-space:nowrap;letter-spacing:-0.43px;left:452px;">Current Status</div>
<div style="position:absolute;top:176.84px;font-size:12px;line-height:12px;font-weight:700;color:#3b4049;white-space:nowrap;letter-spacing:-0.53px;left:606px;">Login Time</div>
<svg style="position:absolute;left:420px;top:174px" width="8" height="16" viewBox="0 0 8 16"><path d="M4 1 L7.3 6.5 L0.7 6.5 Z" fill="none" stroke="#3b4049" stroke-width="1.1"/><path d="M0.7 9 L7.3 9 L4 14.5 Z" fill="none" stroke="#3b4049" stroke-width="1.1"/></svg>
<svg style="position:absolute;left:574px;top:174px" width="8" height="16" viewBox="0 0 8 16"><path d="M4 1 L7.3 6.5 L0.7 6.5 Z" fill="#3b4049" stroke="#3b4049" stroke-width="1.1"/><path d="M0.7 9 L7.3 9 L4 14.5 Z" fill="none" stroke="#3b4049" stroke-width="1.1"/></svg>
<svg style="position:absolute;left:728px;top:174px" width="8" height="16" viewBox="0 0 8 16"><path d="M4 1 L7.3 6.5 L0.7 6.5 Z" fill="none" stroke="#3b4049" stroke-width="1.1"/><path d="M0.7 9 L7.3 9 L4 14.5 Z" fill="none" stroke="#3b4049" stroke-width="1.1"/></svg>
<div style="position:absolute;left:769px;top:81px;width:254px;height:398px;background:#fdfdfd;"></div>
<div style="position:absolute;left:891.0px;top:97px;width:2px;height:2px;background:#75839a;"></div>
<div style="position:absolute;left:895.0px;top:97px;width:2px;height:2px;background:#75839a;"></div>
<div style="position:absolute;left:899.0px;top:97px;width:2px;height:2px;background:#75839a;"></div>
<div style="position:absolute;left:891.0px;top:101px;width:2px;height:2px;background:#75839a;"></div>
<div style="position:absolute;left:895.0px;top:101px;width:2px;height:2px;background:#75839a;"></div>
<div style="position:absolute;left:899.0px;top:101px;width:2px;height:2px;background:#75839a;"></div>
<div style="position:absolute;left:997px;top:95.0px;width:2px;height:2px;background:#909cad;"></div>
<div style="position:absolute;left:997px;top:98.5px;width:2px;height:2px;background:#909cad;"></div>
<div style="position:absolute;left:997px;top:102.0px;width:2px;height:2px;background:#909cad;"></div>
<div style="position:absolute;left:793px;top:120px;width:206px;height:2px;background:#3b4049;"></div>
<div style="position:absolute;top:127.49px;font-size:11px;line-height:11px;font-weight:700;color:#3b4049;white-space:nowrap;letter-spacing:-0.35px;left:793px;">Agent Summary</div>
<div style="position:absolute;top:154.68px;font-size:24px;line-height:24px;font-weight:400;color:#3b4049;white-space:nowrap;left:793px;">Bluesky</div>
<div style="position:absolute;left:793px;top:252px;width:206px;height:1px;background:#c8cfda;"></div>
<div style="position:absolute;left:793px;top:251px;width:3px;height:3px;background:#2a2f38;"></div>
<div style="position:absolute;top:276.07px;font-size:20px;line-height:20px;font-weight:400;color:#3b4049;white-space:nowrap;letter-spacing:-0.1px;left:793px;">% Call Transfers Made</div>
<svg style="position:absolute;left:0;top:0" width="1280" height="800"><path d="M804.3 334.3 C809.3 334.3 812.2 338.6 812.2 344.5 L812.2 351.7 C812.2 357.6 809.3 361.9 804.3 361.9 C799.3 361.9 796.0 357.6 796.0 351.7 L796.0 344.5 C796.0 338.6 799.3 334.3 804.3 334.3 Z" fill="none" stroke="#3b4049" stroke-width="1.7"/><ellipse cx="823.3" cy="340.2" rx="4.3" ry="5.5" fill="none" stroke="#3b4049" stroke-width="1.6"/><ellipse cx="838.5" cy="356.2" rx="4.5" ry="5.7" fill="none" stroke="#3b4049" stroke-width="1.6"/><path d="M824.4 359.6 L838.7 337.4" stroke="#3b4049" stroke-width="1.5"/></svg>
<div style="position:absolute;left:863.5px;top:442.5px;width:5px;height:5px;border-radius:50%;background:#c5ccd6"></div>
<div style="position:absolute;left:873.5px;top:442.5px;width:5px;height:5px;border-radius:50%;background:#c5ccd6"></div>
<div style="position:absolute;left:883.5px;top:442.5px;width:5px;height:5px;border-radius:50%;background:#c5ccd6"></div>
<div style="position:absolute;left:893.5px;top:442.5px;width:5px;height:5px;border-radius:50%;background:#c5ccd6"></div>
<div style="position:absolute;left:903.5px;top:442.5px;width:5px;height:5px;border-radius:50%;background:#22252a"></div>
<div style="position:absolute;left:913.5px;top:442.5px;width:5px;height:5px;border-radius:50%;background:#c5ccd6"></div>
<div style="position:absolute;left:923.5px;top:442.5px;width:5px;height:5px;border-radius:50%;background:#c5ccd6"></div>
<div style="position:absolute;left:1025px;top:81px;width:254px;height:398px;background:#fdfdfd;"></div>
<div style="position:absolute;left:1147.0px;top:97px;width:2px;height:2px;background:#75839a;"></div>
<div style="position:absolute;left:1151.0px;top:97px;width:2px;height:2px;background:#75839a;"></div>
<div style="position:absolute;left:1155.0px;top:97px;width:2px;height:2px;background:#75839a;"></div>
<div style="position:absolute;left:1147.0px;top:101px;width:2px;height:2px;background:#75839a;"></div>
<div style="position:absolute;left:1151.0px;top:101px;width:2px;height:2px;background:#75839a;"></div>
<div style="position:absolute;left:1155.0px;top:101px;width:2px;height:2px;background:#75839a;"></div>
<div style="position:absolute;left:1253px;top:95.0px;width:2px;height:2px;background:#909cad;"></div>
<div style="position:absolute;left:1253px;top:98.5px;width:2px;height:2px;background:#909cad;"></div>
<div style="position:absolute;left:1253px;top:102.0px;width:2px;height:2px;background:#909cad;"></div>
<div style="position:absolute;left:1049px;top:120px;width:206px;height:2px;background:#3b4049;"></div>
<div style="position:absolute;top:127.49px;font-size:11px;line-height:11px;font-weight:700;color:#3b4049;white-space:nowrap;letter-spacing:-0.42px;left:1049px;">Agent Group Current Status</div>
<div style="position:absolute;top:156.69px;font-size:19.5px;line-height:19.5px;font-weight:400;color:#3b4049;white-space:nowrap;letter-spacing:-0.5px;left:1049px;">Bluesky</div>
<svg style="position:absolute;left:0;top:0" width="1280" height="800"><path d="M1153.20 210.61 A63.6 63.6 0 0 1 1212.99 292.90" fill="none" stroke="#2a7f9b" stroke-width="8"/><path d="M1212.37 294.80 A63.6 63.6 0 0 1 1196.46 319.87" fill="none" stroke="#2d66d8" stroke-width="8"/><path d="M1195.00 321.24 A63.6 63.6 0 0 1 1137.35 336.04" fill="none" stroke="#6399f5" stroke-width="8"/><path d="M1135.42 335.55 A63.6 63.6 0 0 1 1151.20 210.61" fill="none" stroke="#1f3575" stroke-width="8"/></svg>
<div style="position:absolute;top:261.49px;font-size:32.5px;line-height:32.5px;font-weight:400;color:#3b4049;white-space:nowrap;letter-spacing:-0.8px;left:1002.5999999999999px;width:300px;text-align:center;-webkit-text-stroke:0.4px #3b4049;">50</div>
<div style="position:absolute;top:261.69px;font-size:11px;line-height:11px;font-weight:400;color:#111;white-space:nowrap;left:926px;width:300px;text-align:center;">A</div>
<div style="position:absolute;top:345.69px;font-size:11px;line-height:11px;font-weight:400;color:#111;white-space:nowrap;left:1021px;width:300px;text-align:center;">B</div>
<div style="position:absolute;top:312.69px;font-size:11px;line-height:11px;font-weight:400;color:#111;white-space:nowrap;left:1066.5px;width:300px;text-align:center;">C</div>
<div style="position:absolute;top:225.69px;font-size:11px;line-height:11px;font-weight:400;color:#111;white-space:nowrap;left:1063.5px;width:300px;text-align:center;">D</div>
<div style="position:absolute;top:365.04px;font-size:12px;line-height:12px;font-weight:400;color:#3b4049;white-space:nowrap;letter-spacing:0.05px;left:1073px;">A Agents Logged In</div>
<div style="position:absolute;top:365.04px;font-size:12px;line-height:12px;font-weight:400;color:#3b4049;white-space:nowrap;left:934.5px;width:300px;text-align:right;">23</div>
<div style="position:absolute;top:381.04px;font-size:12px;line-height:12px;font-weight:400;color:#3b4049;white-space:nowrap;letter-spacing:0.05px;left:1073px;">B Agents Not Ready</div>
<div style="position:absolute;top:381.04px;font-size:12px;line-height:12px;font-weight:400;color:#3b4049;white-space:nowrap;left:934.5px;width:300px;text-align:right;">8</div>
<div style="position:absolute;top:397.04px;font-size:12px;line-height:12px;font-weight:400;color:#3b4049;white-space:nowrap;letter-spacing:0.05px;left:1073px;">C Agents ACW</div>
<div style="position:absolute;top:397.04px;font-size:12px;line-height:12px;font-weight:400;color:#3b4049;white-space:nowrap;left:934.5px;width:300px;text-align:right;">4</div>
<div style="position:absolute;top:413.04px;font-size:12px;line-height:12px;font-weight:400;color:#3b4049;white-space:nowrap;letter-spacing:0.05px;left:1073px;">D Agents Waiting</div>
<div style="position:absolute;top:413.04px;font-size:12px;line-height:12px;font-weight:400;color:#3b4049;white-space:nowrap;left:934.5px;width:300px;text-align:right;">15</div>
<div style="position:absolute;left:769px;top:481px;width:254px;height:319px;background:#fdfdfd;"></div>
<div style="position:absolute;left:891.0px;top:497px;width:2px;height:2px;background:#75839a;"></div>
<div style="position:absolute;left:895.0px;top:497px;width:2px;height:2px;background:#75839a;"></div>
<div style="position:absolute;left:899.0px;top:497px;width:2px;height:2px;background:#75839a;"></div>
<div style="position:absolute;left:891.0px;top:501px;width:2px;height:2px;background:#75839a;"></div>
<div style="position:absolute;left:895.0px;top:501px;width:2px;height:2px;background:#75839a;"></div>
<div style="position:absolute;left:899.0px;top:501px;width:2px;height:2px;background:#75839a;"></div>
<div style="position:absolute;left:997px;top:495.0px;width:2px;height:2px;background:#909cad;"></div>
<div style="position:absolute;left:997px;top:498.5px;width:2px;height:2px;background:#909cad;"></div>
<div style="position:absolute;left:997px;top:502.0px;width:2px;height:2px;background:#909cad;"></div>
<div style="position:absolute;left:793px;top:520px;width:206px;height:2px;background:#3b4049;"></div>
<div style="position:absolute;top:527.49px;font-size:11px;line-height:11px;font-weight:700;color:#3b4049;white-space:nowrap;letter-spacing:-0.36px;left:793px;">Agent or Agent Group eService Current…</div>
<div style="position:absolute;top:554.68px;font-size:24px;line-height:24px;font-weight:400;color:#3b4049;white-space:nowrap;left:793px;">Bluesky</div>
<div style="position:absolute;left:793px;top:652px;width:206px;height:1px;background:#c8cfda;"></div>
<div style="position:absolute;left:793px;top:651px;width:3px;height:3px;background:#2a2f38;"></div>
<div style="position:absolute;top:676.07px;font-size:20px;line-height:20px;font-weight:400;color:#3b4049;white-space:nowrap;letter-spacing:0.12px;left:793px;">Social Media Offered</div>
<svg style="position:absolute;left:0;top:0" width="1280" height="800"><path d="M804.3 734.3 C809.3 734.3 812.2 738.6 812.2 744.5 L812.2 751.7 C812.2 757.6 809.3 761.9 804.3 761.9 C799.3 761.9 796.0 757.6 796.0 751.7 L796.0 744.5 C796.0 738.6 799.3 734.3 804.3 734.3 Z" fill="none" stroke="#3b4049" stroke-width="1.7"/></svg>
<div style="position:absolute;left:1025px;top:481px;width:254px;height:198px;background:#fdfdfd;"></div>
<div style="position:absolute;left:1147.0px;top:497px;width:2px;height:2px;background:#75839a;"></div>
<div style="position:absolute;left:1151.0px;top:497px;width:2px;height:2px;background:#75839a;"></div>
<div style="position:absolute;left:1155.0px;top:497px;width:2px;height:2px;background:#75839a;"></div>
<div style="position:absolute;left:1147.0px;top:501px;width:2px;height:2px;background:#75839a;"></div>
<div style="position:absolute;left:1151.0px;top:501px;width:2px;height:2px;background:#75839a;"></div>
<div style="position:absolute;left:1155.0px;top:501px;width:2px;height:2px;background:#75839a;"></div>
<div style="position:absolute;left:1049px;top:520px;width:206px;height:2px;background:#3b4049;"></div>
<div style="position:absolute;top:527.49px;font-size:11px;line-height:11px;font-weight:700;color:#3b4049;white-space:nowrap;letter-spacing:-0.38px;left:1049px;">Add a Widget</div>
<div style="position:absolute;left:1116px;top:600.5px;width:72px;height:11.5px;background:#8a96a6;"></div>
<div style="position:absolute;left:1146.2px;top:570px;width:11.5px;height:72px;background:#8a96a6;"></div>
<svg style="position:absolute;left:0;top:797px" width="3" height="3" viewBox="0 0 3 3"><path d="M0 0 L0 3 L3 3 A3 3 0 0 1 0 0 Z" fill="#000"/></svg>
<svg style="position:absolute;left:1277px;top:797px" width="3" height="3" viewBox="0 0 3 3"><path d="M3 0 L3 3 L0 3 A3 3 0 0 0 3 0 Z" fill="#000"/></svg>
</body></html>
